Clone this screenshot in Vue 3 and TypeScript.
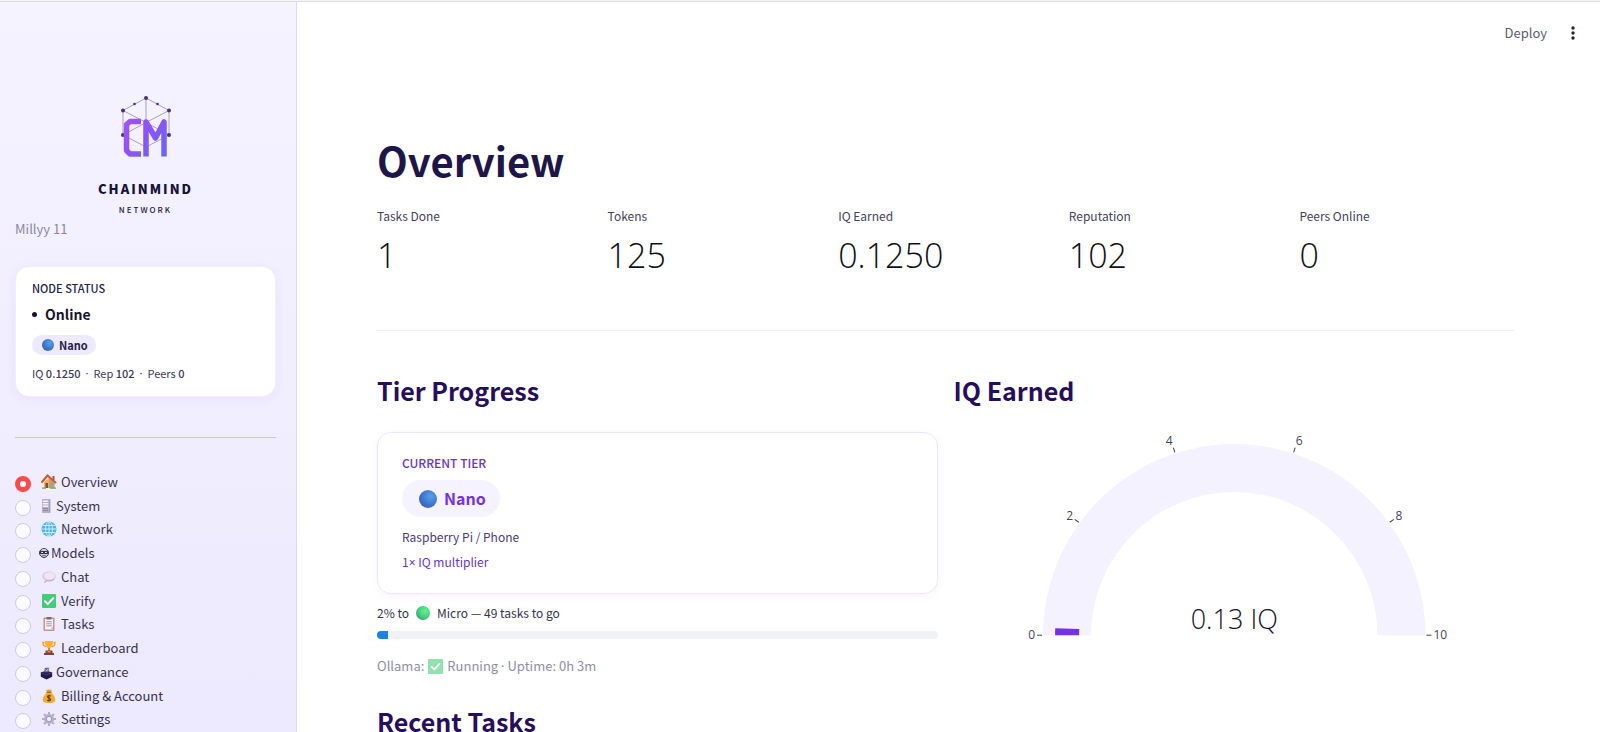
<script setup lang="ts">
import { computed, ref } from 'vue'

interface NavItem {
  id: string
  label: string
  size: 'wide' | 'narrow' | 'glyph' | 'solid'
}

const navItems: NavItem[] = [
  { id: 'overview', label: 'Overview', size: 'wide' },
  { id: 'system', label: 'System', size: 'narrow' },
  { id: 'network', label: 'Network', size: 'wide' },
  { id: 'models', label: 'Models', size: 'glyph' },
  { id: 'chat', label: 'Chat', size: 'wide' },
  { id: 'verify', label: 'Verify', size: 'wide' },
  { id: 'tasks', label: 'Tasks', size: 'wide' },
  { id: 'leaderboard', label: 'Leaderboard', size: 'wide' },
  { id: 'governance', label: 'Governance', size: 'solid' },
  { id: 'billing', label: 'Billing & Account', size: 'wide' },
  { id: 'settings', label: 'Settings', size: 'wide' },
]
const page = ref('overview')

const metrics = [
  { label: 'Tasks Done', value: '1' },
  { label: 'Tokens', value: '125' },
  { label: 'IQ Earned', value: '0.1250' },
  { label: 'Reputation', value: '102' },
  { label: 'Peers Online', value: '0' },
]

const progress = 2

// Gauge geometry, in the units of the SVG view box
const cx = 280
const cy = 211
const iq = 0.125
const point = (value: number, radius: number) => {
  const a = Math.PI * (1 - value / 10)
  return { x: cx + radius * Math.cos(a), y: cy - radius * Math.sin(a) }
}
const band = (from: number, to: number, inner: number, outer: number) => {
  const a = point(from, outer)
  const b = point(to, outer)
  const c = point(to, inner)
  const d = point(from, inner)
  return `M${a.x} ${a.y}A${outer} ${outer} 0 0 1 ${b.x} ${b.y}L${c.x} ${c.y}A${inner} ${inner} 0 0 0 ${d.x} ${d.y}Z`
}
const track = band(0, 10, 143, 191)
const bar = computed(() => band(0, iq, 155, 179))
const ticks = [0, 2, 4, 6, 8, 10].map((value) => {
  const text = point(value, 199)
  const lift = Math.sin((Math.PI * value) / 10)
  return {
    value,
    a: point(value, 192),
    b: point(value, 197),
    x: text.x,
    // labels near the top of the arc sit above their tick
    y: text.y + 4 - 5 * lift * lift,
    anchor: value < 5 ? 'end' : 'start',
  }
})
</script>

<template>
  <div class="shell">
    <svg class="defs" width="0" height="0" aria-hidden="true">
      <defs>
        <linearGradient id="lgMark" x1="0" y1="24" x2="50" y2="66" gradientUnits="userSpaceOnUse">
          <stop offset="0" stop-color="#a94ff8" />
          <stop offset="0.5" stop-color="#8b55f3" />
          <stop offset="1" stop-color="#6169f5" />
        </linearGradient>
        <radialGradient id="ballBlue" cx="0.65" cy="0.35" r="0.75">
          <stop offset="0" stop-color="#5aa0ea" />
          <stop offset="0.6" stop-color="#3f76cf" />
          <stop offset="1" stop-color="#3c5db0" />
        </radialGradient>
        <radialGradient id="ballGreen" cx="0.65" cy="0.35" r="0.75">
          <stop offset="0" stop-color="#66f090" />
          <stop offset="0.6" stop-color="#45cf80" />
          <stop offset="1" stop-color="#3c9a78" />
        </radialGradient>
      </defs>
    </svg>

    <aside class="sidebar">
      <header class="brand">
        <svg class="mark" width="56" height="66" viewBox="0 0 56 66" role="img" aria-label="ChainMind logo">
          <g stroke="#a7a2bd" stroke-width="1" fill="none">
            <path d="M28 4 51 16.500V41L28 53 5 41V16.500ZM28 4V28.500M5 16.500 28 28.500 51 16.500M5 41 28 28.500 51 41" />
          </g>
          <g fill="#46307c">
            <circle cx="28" cy="4" r="2" /><circle cx="5" cy="16.500" r="2" /><circle cx="51" cy="16.500" r="2" />
            <circle cx="5" cy="41" r="2" /><circle cx="51" cy="41" r="2" />
            <circle cx="16.500" cy="10" r="1.300" /><circle cx="39.500" cy="10" r="1.300" />
          </g>
          <g fill="none" stroke="url(#lgMark)" stroke-width="5.500">
            <path d="M23 27.500H12L8.500 30.500V56.500L12 60H23" stroke-linejoin="round" />
            <path d="M28 62.500V28L37.500 44 46 28V62.500" stroke-linejoin="round" />
          </g>
        </svg>
        <strong class="brand-name">CHAINMIND</strong>
        <span class="brand-sub">NETWORK</span>
      </header>
      <p class="user">Millyy 11</p>

      <section class="status">
        <h2 class="status-title">NODE STATUS</h2>
        <p class="status-state"><span class="dot"></span>Online</p>
        <p class="chip">
          <svg width="12" height="12" viewBox="0 0 12 12"><circle cx="6" cy="6" r="6" fill="url(#ballBlue)" /></svg>
          Nano
        </p>
        <p class="status-line">
          <span>IQ <b>0.1250</b></span><span class="sym">·</span><span>Rep <b>102</b></span><span class="sym">·</span><span>Peers <b>0</b></span>
        </p>
      </section>

      <hr class="side-rule" />

      <nav class="nav" aria-label="Pages">
        <label v-for="item in navItems" :key="item.id" class="nav-item" :class="item.size">
          <input v-model="page" type="radio" name="page" :value="item.id" />
          <svg class="icon" viewBox="0 0 16 16" aria-hidden="true">
            <template v-if="item.id === 'overview'">
              <path d="M11.500 2h2v4h-2z" fill="#a65a3c" />
              <path d="M3 8 8 4l5.500 4.500V14H3z" fill="#e9b268" />
              <path d="M8 4l5.500 4.500V14H8z" fill="#d99a55" />
              <path d="M1 8 6.500 1.500 14.500 8.500" fill="none" stroke="#cc5838" stroke-width="2" stroke-linecap="round" />
              <path d="M4.500 9H7v5H4.500z" fill="#8a4b35" />
              <path d="M9.500 9h3v2.500h-3z" fill="#55b8ea" />
              <path d="M1 13.500h4v1.200H1zM9 13.500h6v1.200H9z" fill="#6fae55" />
            </template>
            <template v-else-if="item.id === 'system'">
              <rect x="4" y="1" width="8.500" height="14" rx="0.800" fill="#b6b0c6" />
              <path d="M4.800 2.500h5.500v1.500H4.800zM4.800 5h5.500v1.500H4.800zM4.800 7.500h5.500V9H4.800z" fill="#f3f0fa" />
              <path d="M5 10.500h5M5 12.500h5" stroke="#8d86a4" />
              <path d="M11.500 1.500v13" stroke="#a39cb8" />
            </template>
            <template v-else-if="item.id === 'network'">
              <circle cx="8" cy="8" r="7.500" fill="#4bb4f0" />
              <g fill="none" stroke="#d5f1ff" stroke-width="0.900">
                <ellipse cx="8" cy="8" rx="3.500" ry="7.300" /><path d="M8 .7v14.600M.7 8h14.600M1.800 4.500h12.400M1.800 11.500h12.400" />
              </g>
            </template>
            <template v-else-if="item.id === 'models'">
              <circle cx="8" cy="8" r="6" fill="#f2efff" stroke="#3a3654" stroke-width="1.300" />
              <rect x="2" y="5" width="12" height="4.500" rx="1" fill="#3a3654" />
              <path d="M4.500 7.300h2M9.500 7.300h2" stroke="#fff" stroke-width="1.500" />
              <path d="M5 11.800h6" stroke="#3a3654" stroke-width="1.200" />
            </template>
            <template v-else-if="item.id === 'chat'">
              <path d="M8 2.500c4 0 6.700 2 6.700 4.800S12 12 8.500 12c-1 0-1.700 0-2.500-.3L3 14l.6-3.300C2 10 1.200 8.800 1.200 7.300 1.200 4.500 4 2.500 8 2.500z" fill="#d9cbe6" />
              <path d="M8.500 3.200c3.200 0 5.500 1.500 5.500 3.600S11.800 10.500 8.500 10.500 3 9 3 6.800s2.300-3.600 5.500-3.600z" fill="#efe5f6" />
              <path d="M3.300 13.500 6 11.700c3 .7 6 0 7.500-1.700" fill="none" stroke="#ab95c3" stroke-width="0.800" />
            </template>
            <template v-else-if="item.id === 'verify'">
              <rect x="1" y="1" width="14" height="14" rx="1" fill="#42cc78" />
              <path d="M4 8.300 6.800 11 12.200 5.300" fill="none" stroke="#fff" stroke-width="2" stroke-linecap="round" stroke-linejoin="round" />
            </template>
            <template v-else-if="item.id === 'tasks'">
              <rect x="2.500" y="1.500" width="11" height="13.500" rx="1" fill="#c9927c" />
              <path d="M4 3h8v10.500H4z" fill="#f6f2fb" />
              <path d="M5.500 1h5v2.500h-5z" fill="#6f6a85" />
              <path d="M5.300 5.700h5.500M5.300 7.800h5.500M5.300 9.900h5.500" stroke="#8d88a4" stroke-width="0.900" />
              <path d="M9 13.500 12 10.500v3z" fill="#c9c2dc" />
            </template>
            <template v-else-if="item.id === 'leaderboard'">
              <path d="M3.500 2.500H2C2 5 3 6.500 5 6.500M12.500 2.500H14c0 2.500-1 4-3 4" fill="none" stroke="#f0972d" stroke-width="1.300" />
              <path d="M4 1h8c0 4-1 6.500-4 7.500C5 7.500 4 5 4 1z" fill="#f9b22e" />
              <path d="M7 8h2v3H7z" fill="#e0832b" />
              <path d="M4.500 10.500h7V13h-7zM3 13h10v2H3z" fill="#814238" />
              <path d="M6.500 11.200h3v1.200h-3z" fill="#f5a93b" />
            </template>
            <template v-else-if="item.id === 'governance'">
              <path d="M1 7.500 8 5l7 2.500v5L8 16l-7-3.500z" fill="#211c4b" />
              <path d="M1 7.500 8 10l7-2.500" fill="none" stroke="#5a5580" stroke-width="0.800" />
              <path d="M6 1.500h5.500L10.500 7H5z" fill="#6f6a92" />
              <path d="M7 4l1.200 1.200L10.500 3" fill="none" stroke="#fff" stroke-width="0.900" />
            </template>
            <template v-else-if="item.id === 'billing'">
              <path d="M6 4 5 1.500 7 2l1-1.300L9 2l2-.5L10 4z" fill="#eda52f" />
              <path d="M6 4.500h4c2.500 2.200 4.300 5 4.300 7.300 0 2.200-1.800 3.200-6.300 3.200s-6.300-1-6.300-3.200C1.700 9.500 3.500 6.700 6 4.500z" fill="#f3ab34" />
              <path d="M5.500 4.300h5" stroke="#9c5c28" stroke-width="1.200" />
              <path d="M9.800 8.200C9 7.300 6.500 7.300 6.500 8.800S9.700 10 9.700 11.500 7 13 6.200 12M8 6.700v6.800" fill="none" stroke="#5d3b2c" stroke-width="1.100" />
            </template>
            <template v-else>
              <g stroke="#b3abc8" stroke-width="2">
                <path d="M8 1v14M1 8h14M3 3l10 10M3 13 13 3" />
              </g>
              <circle cx="8" cy="8" r="5" fill="#b9b1cc" />
              <circle cx="8" cy="8" r="2.700" fill="#f0edfb" stroke="#8d86a8" stroke-width="0.800" />
            </template>
          </svg>
          <span>{{ item.label }}</span>
        </label>
      </nav>
    </aside>

    <main class="main">
      <div class="toolbar">
        <button type="button" class="deploy">Deploy</button>
        <button type="button" class="more" aria-label="Main menu">
          <svg width="4" height="14" viewBox="0 0 4 14" fill="#26233a">
            <circle cx="2" cy="2" r="1.700" /><circle cx="2" cy="7" r="1.700" /><circle cx="2" cy="12" r="1.700" />
          </svg>
        </button>
      </div>

      <div class="content">
        <h1>Overview</h1>

        <dl class="metrics">
          <div v-for="m in metrics" :key="m.label">
            <dt>{{ m.label }}</dt>
            <dd>{{ m.value }}</dd>
          </div>
        </dl>

        <hr class="rule" />

        <div class="columns">
          <section>
            <h2>Tier Progress</h2>
            <div class="tier">
              <h3>CURRENT TIER</h3>
              <p class="tier-chip">
                <svg width="18" height="18" viewBox="0 0 12 12"><circle cx="6" cy="6" r="6" fill="url(#ballBlue)" /></svg>
                Nano
              </p>
              <p class="tier-device">Raspberry Pi / Phone</p>
              <p class="tier-rate">1<span class="sym">×</span> IQ multiplier</p>
            </div>
            <p id="progress-label" class="progress-label">
              2% to
              <svg width="14" height="14" viewBox="0 0 12 12"><circle cx="6" cy="6" r="6" fill="url(#ballGreen)" /></svg>
              Micro — 49 tasks to go
            </p>
            <div class="progress" role="progressbar" aria-labelledby="progress-label" :aria-valuenow="progress">
              <div class="progress-fill" :style="{ width: progress + '%' }"></div>
            </div>
            <p class="caption">
              Ollama:
              <svg width="15" height="15" viewBox="0 0 16 16">
                <rect x="0" y="0" width="16" height="16" rx="1" fill="#92e2b1" />
                <path d="M4 8.300 6.800 11 12.200 5.300" fill="none" stroke="#fff" stroke-width="2" stroke-linecap="round" stroke-linejoin="round" />
              </svg>
              <span>Running <span class="sym">·</span> Uptime: 0h 3m</span>
            </p>
          </section>

          <section>
            <h2>IQ Earned</h2>
            <svg class="gauge" viewBox="0 0 560 230" role="img" aria-label="IQ earned gauge">
              <path :d="track" fill="#f4f2ff" />
              <path :d="bar" fill="#7431e8" />
              <g v-for="t in ticks" :key="t.value">
                <line :x1="t.a.x" :y1="t.a.y" :x2="t.b.x" :y2="t.b.y" stroke="#444" stroke-width="1" />
                <text :x="t.x" :y="t.y" :text-anchor="t.anchor" class="tick">{{ t.value }}</text>
              </g>
              <text :x="cx" y="205" text-anchor="middle" class="reading">0.13 IQ</text>
            </svg>
          </section>
        </div>

        <h2 class="recent">Recent Tasks</h2>
      </div>
    </main>
  </div>
</template>

<style>
html,
body {
  margin: 0;
  background: #fff;
}
</style>

<style scoped>
* {
  box-sizing: border-box;
}
h1,
h2,
h3,
p,
dl,
dd {
  margin: 0;
}
.shell {
  position: relative;
  display: flex;
  height: 100vh;
  overflow: hidden;
  padding-top: 2px;
  background: linear-gradient(#f4f5f5 1px, #dcdde0 1px, #dcdde0 2px, #fff 2px);
  color: #31334a;
  font: 13px/20px 'Noto Sans CJK SC', 'Noto Sans', sans-serif;
}
.defs {
  position: absolute;
}
/* the CJK family sets these marks full width */
.sym {
  font-family: 'Noto Sans', sans-serif;
}
.sidebar {
  flex: 0 0 297px;
  padding: 92px 20px 0 15px;
  border-right: 1px solid #ddd6fe;
  background: linear-gradient(#f5f3ff, #ede9fe);
  overflow: hidden;
}
.brand {
  display: flex;
  flex-direction: column;
  align-items: center;
}
.brand-name {
  margin-top: 19px;
  font-size: 13px;
  line-height: 20px;
  font-weight: 900;
  letter-spacing: 2px;
  color: #17123a;
}
.brand-sub {
  margin-top: 2px;
  font-size: 8px;
  line-height: 18px;
  font-weight: 500;
  letter-spacing: 2px;
  color: #1f1a40;
}
.user {
  color: #8b879d;
}
.status {
  margin-top: 27px;
  padding: 13px 16px;
  border: 1px solid #f0edfe;
  border-radius: 14px;
  background: #fff;
  box-shadow: 0 2px 12px rgba(124, 58, 237, 0.06);
}
.status-title {
  font-size: 11px;
  line-height: 16px;
  font-weight: 500;
  color: #26223f;
}
.status-state {
  display: flex;
  align-items: center;
  gap: 8px;
  margin-top: 8px;
  font-size: 14px;
  font-weight: 700;
  color: #17142f;
}
.dot {
  width: 5px;
  height: 5px;
  border-radius: 50%;
  background: #17142f;
}
.chip {
  display: inline-flex;
  align-items: center;
  gap: 5px;
  margin-top: 11px;
  padding: 0 8px 0 10px;
  border-radius: 10px;
  background: #ede9fe;
  font-size: 11px;
  font-weight: 700;
  color: #26204a;
}
.status-line {
  display: flex;
  gap: 5px;
  margin-top: 7px;
  font-size: 11px;
  color: #3c3854;
}
.status-line b {
  font-weight: 500;
}
.side-rule,
.rule {
  height: 1px;
  border: 0;
  margin: 40px 0 0;
  background: #c9bff5;
}
.nav {
  display: grid;
  grid-template-rows: repeat(11, 1fr);
  height: 261px;
  margin-top: 34px;
}
.nav-item {
  display: flex;
  align-items: flex-start;
  color: #37344f;
}
.nav-item input {
  appearance: none;
  flex: none;
  width: 16px;
  height: 16px;
  margin: 4px 10px 0 0;
  border: 1px solid #d0cadd;
  border-radius: 50%;
  background: #fbfaff;
}
.nav-item input:checked {
  border: 5px solid #ff4b4b;
  background: #fff;
}
.icon {
  flex: none;
  width: 16px;
  height: 16px;
  margin: 2px 4px 0 0;
}
.narrow .icon {
  margin: 2px 2px 0 -3px;
}
.glyph .icon {
  width: 12px;
  margin: 2px 1px 0 -3px;
}
.solid .icon {
  width: 13px;
  margin: 3px 3px 0 -1px;
}
.main {
  flex: 1;
  min-width: 0;
  overflow: hidden;
}
.toolbar {
  display: flex;
  align-items: center;
  justify-content: flex-end;
  gap: 24px;
  height: 62px;
  padding-right: 25px;
}
.toolbar button {
  padding: 0;
  border: 0;
  background: none;
  font: inherit;
  color: #5c5b6c;
}
.more svg {
  display: block;
}
.content {
  padding: 66px 86px 0 80px;
}
h1 {
  font-size: 40px;
  line-height: 60px;
  font-weight: 700;
  color: #1e1648;
}
.metrics {
  display: grid;
  grid-template-columns: repeat(5, 1fr);
  gap: 16px;
  margin-top: 16px;
}
.metrics dt {
  font-size: 12px;
  line-height: 20px;
  color: #44425a;
}
.metrics dd {
  margin-top: 5px;
  font: 300 34px/48px 'Open Sans', sans-serif;
  color: #101019;
}
.rule {
  margin-top: 51px;
  background: #eeecf6;
}
.columns {
  display: grid;
  grid-template-columns: 1fr 1fr;
  gap: 16px;
  margin-top: 41px;
}
h2 {
  font-size: 25px;
  line-height: 36px;
  font-weight: 700;
  color: #270e5c;
}
.tier {
  margin-top: 24px;
  padding: 20px 24px 18px;
  border: 1px solid #ebe7fd;
  border-radius: 14px;
  box-shadow: 0 2px 8px rgba(124, 58, 237, 0.06);
}
.tier h3 {
  font-size: 12px;
  line-height: 20px;
  font-weight: 500;
  color: #6a35cf;
}
.tier-chip {
  display: inline-flex;
  align-items: center;
  gap: 7px;
  margin-top: 7px;
  padding: 0 14px 0 17px;
  border-radius: 19px;
  background: #f5f3ff;
  font-size: 16px;
  line-height: 37px;
  font-weight: 700;
  color: #7432e8;
}
.tier-device,
.tier-rate {
  font-size: 12px;
  line-height: 25px;
}
.tier-device {
  margin-top: 7px;
  color: #4d3a78;
}
.tier-rate {
  color: #6539bd;
}
.progress-label,
.caption {
  display: flex;
  align-items: center;
  gap: 7px;
  margin-top: 9px;
  font-size: 12px;
}
.progress {
  height: 8px;
  margin-top: 8px;
  border-radius: 4px;
  background: #f0f2f6;
  overflow: hidden;
}
.progress-fill {
  height: 100%;
  background: #1c83e1;
}
.caption {
  gap: 4px;
  margin-top: 17px;
  font-size: 13px;
  color: #8f8ea0;
}
.gauge {
  display: block;
  width: 100%;
  margin-top: 16px;
}
.tick {
  font: 12px 'Open Sans', sans-serif;
  fill: #44445a;
}
.reading {
  font: 300 27px 'Open Sans', sans-serif;
  fill: #14122b;
}
.recent {
  margin-top: 27px;
}
</style>
